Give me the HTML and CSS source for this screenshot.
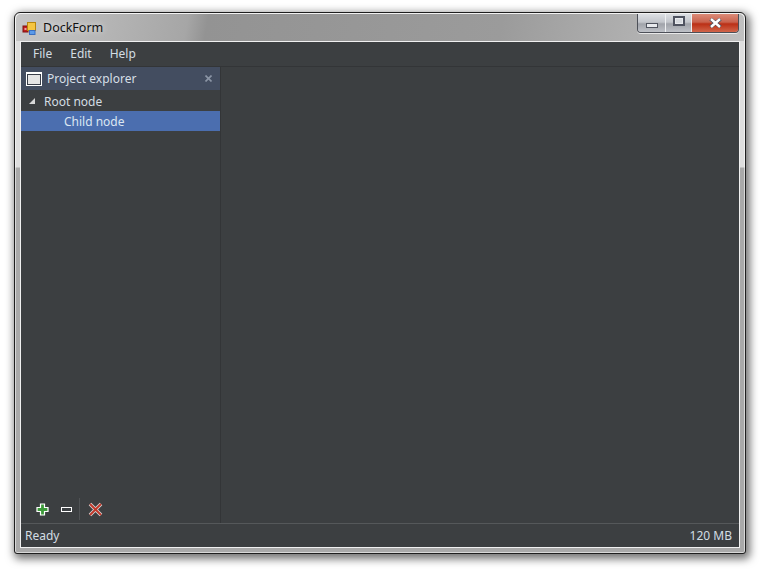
FILE: index.html
```html
<!DOCTYPE html>
<html lang="en">
<head>
<meta charset="utf-8">
<title>DockForm</title>
<link rel="stylesheet" href="styles.css">
</head>
<body>
<div class="window">
  <div class="titlebar">
    <svg class="app-icon" width="16" height="16" viewBox="0 0 16 16">
      <rect x="1" y="6" width="5" height="6" fill="#c02020" stroke="#801010" stroke-width="1"/>
      <rect x="2.5" y="8" width="2" height="2" fill="#f0a0a0"/>
      <rect x="5.5" y="2.5" width="8" height="8" fill="#f5c542" stroke="#b8860b"/>
      <rect x="7.5" y="10.5" width="5.5" height="4" fill="#5b9bea" stroke="#3a6fc0"/>
    </svg>
    <span class="title">DockForm</span>
    <div class="caption">
      <div class="cap cap-min"><span class="min-glyph"></span></div>
      <div class="cap cap-max"><span class="max-glyph"></span></div>
      <div class="cap cap-close">
        <svg width="13" height="10" viewBox="0 0 13 10"><path d="M1.5 1 L11.5 9 M11.5 1 L1.5 9" stroke="#4a5060" stroke-width="3.6"/><path d="M2 1 L11 9 M11 1 L2 9" stroke="#fff" stroke-width="2.4"/></svg>
      </div>
    </div>
  </div>
  <div class="client">
    <nav class="menubar">
      <span class="menu-item">File</span>
      <span class="menu-item">Edit</span>
      <span class="menu-item">Help</span>
    </nav>
    <div class="main">
      <aside class="panel">
        <div class="panel-head">
          <span class="panel-icon"></span>
          <span class="panel-title">Project explorer</span>
          <svg class="panel-close" width="7" height="7" viewBox="0 0 7 7"><path d="M.5 .5 L6.5 6.5 M6.5 .5 L.5 6.5" stroke="#8b95a5" stroke-width="1.6"/></svg>
        </div>
        <div class="tree">
          <div class="node node-root"><span class="arrow"></span><span>Root node</span></div>
          <div class="node node-child">Child node</div>
        </div>
        <div class="toolbar">
          <button class="tool" aria-label="Add">
            <svg width="13" height="13" viewBox="0 0 13 13"><path d="M4.5 1 H8.5 V4.5 H12 V8.5 H8.5 V12 H4.5 V8.5 H1 V4.5 H4.5 Z" fill="#3d9a3a" stroke="#fff" stroke-width="1.2"/></svg>
          </button>
          <button class="tool" aria-label="Remove">
            <svg width="13" height="7" viewBox="0 0 13 7"><rect x="1.5" y="1.5" width="10" height="4" fill="#3c4043" stroke="#fff"/></svg>
          </button>
          <span class="tool-sep"></span>
          <button class="tool" aria-label="Delete">
            <svg width="15" height="15" viewBox="0 0 15 15"><path d="M2 2 L13 13 M13 2 L2 13" stroke="#d8d8d8" stroke-width="3.6"/><path d="M2 2 L13 13 M13 2 L2 13" stroke="#c0392b" stroke-width="2"/></svg>
          </button>
        </div>
      </aside>
      <section class="content"></section>
    </div>
    <footer class="statusbar">
      <span>Ready</span>
      <span>120 MB</span>
    </footer>
  </div>
</div>
</body>
</html>
```

FILE: styles.css
```css
* { box-sizing: border-box; }
html, body { margin: 0; height: 100%; }
body {
  background: #fff;
  padding: 12px 18px 20px 14px;
  overflow: hidden;
  font-family: "Noto Sans", "Open Sans", sans-serif;
  font-size: 12px;
  color: #d3dde3;
}
.window {
  height: 542px;
  display: flex;
  flex-direction: column;
  border: 1px solid #1e1e1e;
  border-radius: 6px 6px 3px 3px;
  padding: 0 5px 5px;
  box-shadow: 2px 3px 9px 2px rgba(0,0,0,.55), inset 0 0 0 1px rgba(255,255,255,.55);
  background:
    linear-gradient(105deg, rgba(255,255,255,.35) 0, rgba(255,255,255,.1) 205px, rgba(255,255,255,0) 222px, rgba(255,255,255,.02) 500px, rgba(255,255,255,.12) 520px, rgba(255,255,255,.2) 740px) 0 0 / 100% 28px no-repeat,
    linear-gradient(#dedede 0, #dedede 154px, #a9a9a9 155px, #a9a9a9 100%);
}
.window { background-color: #9a9a9a; }
.titlebar {
  height: 27px;
  flex: none;
  display: flex;
  align-items: center;
  padding-left: 2px;
  background: linear-gradient(100deg, #c6c6c6 0, #a6a6a6 170px, #939393 190px, #9b9b9b 480px, #a8a8a8 560px, #c0c0c0 720px);
  margin: 0 -4px;
  padding-left: 6px;
  border-radius: 5px 5px 0 0;
  margin-top: 1px;
}
.app-icon { flex: none; }
.title {
  margin-left: 5px;
  color: #111;
  font-size: 12.5px;
  text-shadow: 0 0 6px rgba(255,255,255,.8);
}
.caption {
  margin-left: auto;
  margin-right: 5px;
  align-self: flex-start;
  display: flex;
  height: 19px;
  border: 1px solid #4d5058;
  border-top: 0;
  border-radius: 0 0 4px 4px;
  overflow: hidden;
  box-shadow: 0 1px 0 rgba(255,255,255,.7);
}
.cap {
  display: flex;
  align-items: center;
  justify-content: center;
  height: 100%;
  border-right: 1px solid #eef0f2;
  background: linear-gradient(#dcdfe3 0, #c3c6cc 45%, #a0a3aa 55%, #bfc2c8 100%);
}
.cap-min { width: 28px; }
.cap-max { width: 26px; }
.cap-close {
  width: 46px;
  border-right: 0;
  background: linear-gradient(#dc8b78 0, #c9634e 45%, #bb3016 55%, #d1654a 100%);
}
.min-glyph {
  display: block;
  width: 12px;
  height: 5px;
  margin-top: 5px;
  background: #e8eaee;
  border: 1px solid #50545f;
}
.max-glyph {
  display: block;
  width: 12px;
  height: 10px;
  margin-bottom: 4px;
  background: #d6d9de;
  border: 2px solid #4f5360;
  box-shadow: inset 0 0 0 1px #e8eaee;
}
.client {
  flex: 1;
  display: flex;
  flex-direction: column;
  min-height: 0;
  background: #3c3f41;
  border: 1px solid #f0f0f0;
  border-width: 1px 1px 1px 1px;
}
.menubar {
  height: 25px;
  flex: none;
  display: flex;
  align-items: center;
  gap: 18px;
  padding-left: 12px;
  padding-bottom: 1px;
  border-bottom: 1px solid #333537;
}
.main {
  flex: 1;
  display: flex;
  min-height: 0;
  border-bottom: 1px solid #55585a;
}
.panel {
  width: 200px;
  flex: none;
  display: flex;
  flex-direction: column;
  border-right: 1px solid #333537;
}
.panel-head {
  height: 23px;
  flex: none;
  display: flex;
  align-items: center;
  padding-left: 5px;
  background: #434d60;
  color: #d6dfe6;
}
.panel-icon {
  width: 16px;
  height: 14px;
  border: 1px solid #fff;
  border-top-width: 2px;
  background: #e4e4e4;
  box-shadow: inset 0 0 0 1px #3a3f4a;
  outline: 0;
}
.panel-title { margin-left: 5px; }
.panel-close { margin-left: auto; margin-right: 8px; }
.tree { flex: 1; padding-top: 1px; }
.node { height: 20px; display: flex; align-items: center; }
.node-root { padding-left: 8px; }
.arrow {
  width: 0;
  height: 0;
  margin-right: 9px;
  border-style: solid;
  border-width: 0 0 6px 6px;
  border-color: transparent transparent #d8d8d8 transparent;
}
.node-child {
  padding-left: 43px;
  background: #4b6eaf;
  color: #dbe6f2;
}
.toolbar {
  height: 26px;
  flex: none;
  display: flex;
  align-items: center;
  padding-left: 9px;
  margin-bottom: 1px;
}
.tool {
  width: 24px;
  height: 22px;
  padding: 0;
  border: 0;
  background: transparent;
  display: flex;
  align-items: center;
  justify-content: center;
  margin-right: 0;
}
.tool-sep {
  width: 1px;
  height: 22px;
  margin: 0 3px 0 1px;
  background: #505355;
}
.content { flex: 1; }
.statusbar {
  height: 23px;
  flex: none;
  display: flex;
  align-items: center;
  justify-content: space-between;
  padding: 0 7px 0 4px;
}
```
